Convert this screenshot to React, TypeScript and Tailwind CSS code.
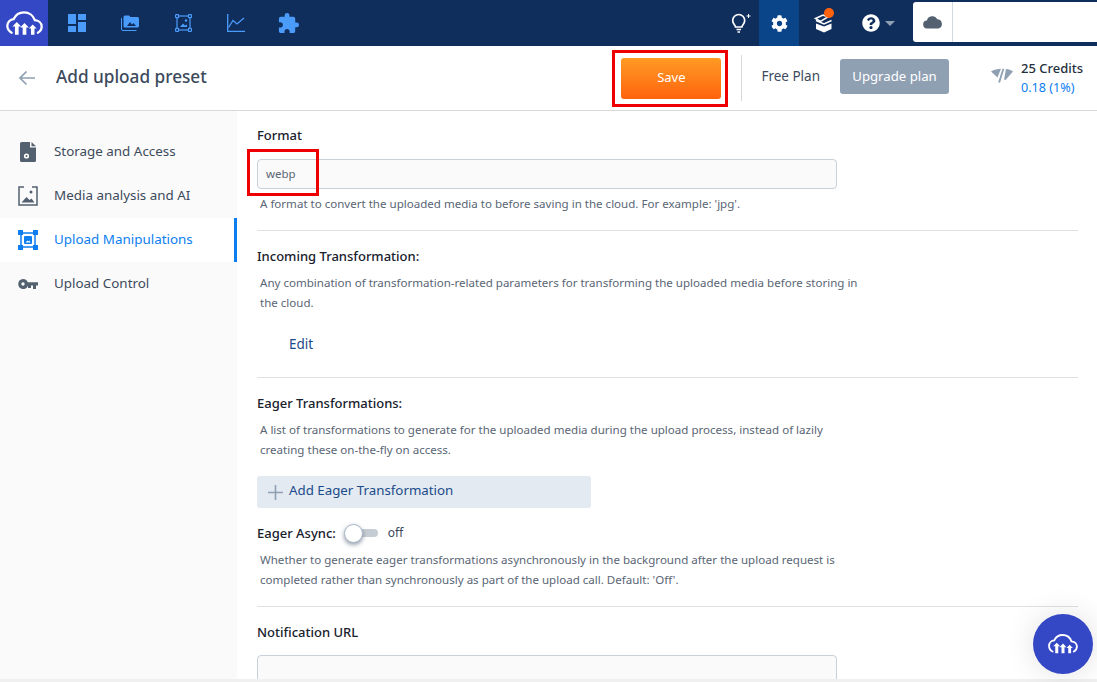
import { FaCog, FaQuestionCircle } from 'react-icons/fa';
import { MdExtension } from 'react-icons/md';

const font = "font-['Noto_Sans','Liberation_Sans',sans-serif]";

function CloudLogo({ className }: { className?: string }) {
  return (
    <svg viewBox="0 0 36 24" className={className} fill="none">
      <path
        d="M5.500 21C3 19.800 1.300 17.300 1.300 14.300c0-3.500 2.700-6.300 6.200-6.600C9.300 3.700 13.200 1.200 17.500 1.200c5 0 9.200 3.200 10.600 7.600 3.500.3 6.600 2.700 6.600 6.200 0 2.600-1.400 4.800-3.700 6"
        stroke="currentColor"
        strokeWidth="2.200"
        strokeLinecap="round"
      />
      <path d="M10.500 10.500l4.200 4.300h-2.400v8.200H8.700v-8.200H6.300z" fill="currentColor" />
      <path d="M18 11.500l4.200 4.300h-2.400v7.200h-3.600v-7.200h-2.400z" fill="currentColor" />
      <path d="M26 13l3.800 3.800h-2.100v6.200h-3.400v-6.200h-2.100z" fill="currentColor" />
    </svg>
  );
}

function NavIcons() {
  return (
    <div className="flex items-center text-[#4b9bfb]">
      <svg viewBox="0 0 18 18" className="ml-[20px] h-[18px] w-[18px]" fill="currentColor">
        <path d="M0 0h8v10H0zM10 0h8v6h-8zM10 8h8v10h-8zM0 12h8v6H0z" />
      </svg>
      <svg viewBox="0 0 18 18" className="ml-[35px] h-[18px] w-[18px]" fill="currentColor">
        <path d="M4 1.500h4l1.500 1.500h7A1.500 1.500 0 0 1 18 4.500V12a1.500 1.500 0 0 1-1.500 1.500H4A1.500 1.500 0 0 1 2.500 12V3A1.500 1.500 0 0 1 4 1.500z" />
        <path d="M.5 4v11A1.500 1.500 0 0 0 2 16.500h13.500" stroke="currentColor" fill="none" strokeWidth="1" />
        <path d="M6 12l3-4 2 2.500 1.500-1.500 2.500 3z" fill="#0f2e5c" />
      </svg>
      <svg viewBox="0 0 17 18" className="ml-[36px] h-[18px] w-[17px]" fill="none" stroke="currentColor" strokeWidth="1.200">
        <rect x="2" y="2" width="13" height="14" />
        <rect x=".6" y=".6" width="3" height="3" rx=".6" fill="#0f2e5c" />
        <rect x="13.400" y=".6" width="3" height="3" rx=".6" fill="#0f2e5c" />
        <rect x=".6" y="14.400" width="3" height="3" rx=".6" fill="#0f2e5c" />
        <rect x="13.400" y="14.400" width="3" height="3" rx=".6" fill="#0f2e5c" />
        <path d="M5 13l3-3.500 2 2 2-1v2.500z" fill="currentColor" stroke="none" />
        <circle cx="11" cy="6.500" r="1.200" fill="currentColor" stroke="none" />
      </svg>
      <svg viewBox="0 0 18 18" className="ml-[35px] h-[18px] w-[18px]" fill="none" stroke="currentColor" strokeWidth="1.300">
        <path d="M.7 0v17.300H18" />
        <path d="M1.500 13.500L6 6.500l4 3.500 7-6" />
      </svg>
      <MdExtension className="ml-[32px] h-[23px] w-[23px]" />
    </div>
  );
}

function TopBar() {
  return (
    <div className="flex h-[46px] items-stretch bg-[#0f2e5c]">
      <div className="flex w-[48px] items-center justify-center bg-[#3448c5] text-white">
        <CloudLogo className="h-[25px] w-[37px]" />
      </div>
      <NavIcons />
      <div className="flex-1" />
      <div className="flex items-center text-white">
        <svg viewBox="0 0 20 24" className="h-[24px] w-[20px]" fill="none" stroke="currentColor" strokeWidth="1.700">
          <path d="M4.500 16c0-2-2.800-3-2.800-6.500a6 6 0 0 1 12 0c0 3.500-2.800 4.500-2.800 6.500z" />
          <path d="M5.500 18.500h4.500M6.500 21h2.500" />
          <path d="M17.500 3v4M15.500 5h4" strokeWidth="1" />
        </svg>
        <div className="ml-[8px] flex h-[46px] w-[40px] items-center justify-center bg-[#0a4489]">
          <FaCog className="h-[17px] w-[17px] text-white" />
        </div>
        <div className="relative ml-[15px] flex h-[46px] w-[20px] items-center">
          <svg viewBox="0 0 20 20" className="h-[20px] w-[20px]" fill="none" stroke="currentColor" strokeWidth="1.500">
            <path d="M1.500 5.500L9 2l5 2-7.500 4.500z" />
            <path d="M2 10.500l8 3 7.500-3V16L10 19.500 2 16z" fill="currentColor" stroke="none" />
            <path d="M2 7.500l8 3.500 7.500-3.500" />
          </svg>
          <div className="absolute left-[10px] top-[8px] h-[10px] w-[10px] rounded-full bg-[#ff620c]" />
        </div>
        <FaQuestionCircle className="ml-[28px] h-[18px] w-[18px]" />
        <div className="ml-[5px] h-0 w-0 border-x-[5px] border-t-[5px] border-x-transparent border-t-[#90a0b3]" />
      </div>
      <div className="ml-[18px] mt-[2px] flex h-[40px] w-[184px] rounded-l-[3px] bg-white">
        <div className="flex w-[40px] items-center justify-center border-r border-[#d1d9e3]">
          <svg viewBox="0 0 20 14" className="h-[14px] w-[20px]" fill="#53606f">
            <path d="M4.500 13.500a4 4 0 0 1-.6-8A5.500 5.500 0 0 1 14.200 4.300 4.700 4.700 0 0 1 15.500 13.500z" />
          </svg>
        </div>
      </div>
    </div>
  );
}

function SubHeader() {
  return (
    <div className="relative flex h-[65px] items-center border-b border-[#d9d9d9] bg-white">
      <svg viewBox="0 0 18 16" className="ml-[18px] h-[16px] w-[18px]" fill="none" stroke="#90a0b3" strokeWidth="1.700">
        <path d="M17 8H2M8.500 1.500L2 8l6.500 6.500" />
      </svg>
      <div className="mb-[2px] ml-[20px] text-[17.200px] font-medium text-[#3c4a5c]">Add upload preset</div>
      <div className="flex-1" />
      <button className="mr-[20px] h-[41px] w-[100px] rounded-[3px] bg-gradient-to-b from-[#ff9a24] to-[#ff620c] text-[13px] text-white">
        Save
      </button>
      <div className="h-[46px] w-px bg-[#d9d9d9]" />
      <div className="mb-[3px] ml-[19px] text-[13.500px] text-[#3c4a5c]">Free Plan</div>
      <button className="mb-[3px] ml-[20px] h-[35px] w-[109px] rounded-[3px] bg-[#90a0b3] text-[13.200px] text-white">
        Upgrade plan
      </button>
      <svg viewBox="0 0 22 15" className="mb-[5px] ml-[42px] h-[15px] w-[22px]" fill="#90a0b3">
        <path d="M0 3.500C3 1.800 6.500.8 10 .8L6.500 9.500z" />
        <path d="M11.500.8h1.800L9 14.800l-1.800-.6z" />
        <path d="M15 1c2.500.3 5 1.200 7 2.500L14.500 12l-1.500-.5z" />
      </svg>
      <div className="ml-[8px] mr-[14px] flex w-[62px] flex-col whitespace-nowrap text-[13px] leading-[19px]">
        <span className="font-medium text-[#26303d]">25 Credits</span>
        <span className="text-[12.600px] text-[#0c7ef0]">0.18 (1%)</span>
      </div>
      <div className="pointer-events-none absolute left-[612px] top-[4px] h-[57px] w-[116px] border-[3px] border-[#ee0000]" />
    </div>
  );
}

const rows = ['Storage and Access', 'Media analysis and AI', 'Upload Manipulations', 'Upload Control'];

function RowIcon({ index, color }: { index: number; color: string }) {
  if (index === 0) {
    return (
      <svg viewBox="0 0 16 20" className="ml-[2px] h-[20px] w-[16px]" fill={color}>
        <path d="M1.500 0H10v5.500h6V18.500a1.500 1.500 0 0 1-1.500 1.500h-13A1.500 1.500 0 0 1 0 18.500v-17A1.500 1.500 0 0 1 1.500 0zM11.500 0L16 4.200h-4.500z" />
        <circle cx="6.500" cy="14" r="2.600" fill="white" />
        <circle cx="6.500" cy="14" r="1" fill={color} />
      </svg>
    );
  }
  if (index === 1) {
    return (
      <svg viewBox="0 0 20 20" className="h-[20px] w-[20px]" fill="none" stroke={color} strokeWidth="1.500">
        <path d="M6 1H1v18h18V1h-5" />
        <path d="M3.500 16.500l5-5.500 3 3 2-1.500 3 4z" fill={color} stroke="none" />
        <circle cx="13" cy="6" r="1.500" fill={color} stroke="none" />
      </svg>
    );
  }
  if (index === 2) {
    return (
      <svg viewBox="0 0 20 20" className="h-[20px] w-[20px]" fill="none" stroke={color} strokeWidth="1.500">
        <rect x="3" y="3" width="14" height="14" />
        <path d="M0 0h5v5H0zM15 0h5v5h-5zM0 15h5v5H0zM15 15h5v5h-5z" fill={color} stroke="none" />
        <rect x="6" y="6" width="8" height="8" rx="1" fill={color} stroke="none" />
        <path d="M7.500 12.500l2-2 1 1 1-1 1 2z" fill="white" stroke="none" />
      </svg>
    );
  }
  return (
    <svg viewBox="0 0 20 10" className="h-[10px] w-[20px]" fill={color}>
      <path d="M5 0a5 5 0 0 1 4.700 3.300H20v3.200h-2V10h-3V6.500h-2V9h-3V6.700A5 5 0 1 1 5 0zm0 3.300a1.700 1.700 0 1 0 0 3.400 1.700 1.700 0 0 0 0-3.400z" />
    </svg>
  );
}

function Sidebar() {
  return (
    <div className="flex w-[237px] shrink-0 flex-col bg-[#fafafa] pt-[19px]">
      {rows.map((label, i) =>
        i === 2 ? (
          <div key={label} className="flex h-[44px] items-center border-r-[3px] border-[#0c7ef0] bg-white">
            <div className="flex w-[54px] items-center pl-[18px]">
              <RowIcon index={i} color="#0c7ef0" />
            </div>
            <span className="pb-[2px] text-[13.400px] text-[#0c7ef0]">{label}</span>
          </div>
        ) : (
          <div key={label} className="flex h-[44px] items-center">
            <div className="flex w-[54px] items-center pl-[18px]">
              <RowIcon index={i} color="#53606f" />
            </div>
            <span className="pb-[2px] text-[13.400px] text-[#3c4a5c]">{label}</span>
          </div>
        )
      )}
    </div>
  );
}

function Label({ children }: { children: string }) {
  return <div className="text-[13px] font-medium leading-[20px] text-[#18212c]">{children}</div>;
}

function Help({ children }: { children: string }) {
  return <p className="ml-[3px] w-[600px] text-[11.550px] leading-[20px] text-[#5a6675]">{children}</p>;
}

function Divider() {
  return <div className="h-px w-[821px] bg-[#e0e0e0]" />;
}

function Content() {
  return (
    <div className="relative flex-1 overflow-hidden bg-white pl-[20px] pt-[14px]">
      <Label>Format</Label>
      <div className="mt-[14px] flex h-[30px] w-[580px] items-center rounded-[4px] border border-[#c6d1dc] bg-[#fafafa] pl-[8px] text-[11.500px] text-[#5a6675]">
        webp
      </div>
      <div className="mt-[5px]">
        <Help>A format to convert the uploaded media to before saving in the cloud. For example: 'jpg'.</Help>
      </div>
      <div className="mt-[16px]">
        <Divider />
      </div>
      <div className="mt-[15px]">
        <Label>Incoming Transformation:</Label>
      </div>
      <div className="mt-[7px]">
        <Help>Any combination of transformation-related parameters for transforming the uploaded media before storing in the cloud.</Help>
      </div>
      <div className="ml-[32px] mt-[21px] text-[13.500px] leading-[20px] text-[#1a4a8a]">Edit</div>
      <div className="mt-[23px]">
        <Divider />
      </div>
      <div className="mt-[15px]">
        <Label>Eager Transformations:</Label>
      </div>
      <div className="mt-[7px]">
        <Help>A list of transformations to generate for the uploaded media during the upload process, instead of lazily creating these on-the-fly on access.</Help>
      </div>
      <div className="mt-[16px] flex h-[32px] w-[334px] items-center rounded-[3px] bg-[#e3eaf1] pb-[2px] pl-[11px] text-[13.300px] text-[#1a4a8a]">
        <svg viewBox="0 0 14 14" className="mr-[6px] mt-[2px] h-[15px] w-[15px]" stroke="#90a0b3" strokeWidth="1.500">
          <path d="M7 0v14M0 7h14" />
        </svg>
        Add Eager Transformation
      </div>
      <div className="mt-[15px] flex h-[20px] items-center">
        <Label>Eager Async:</Label>
        <div className="relative ml-[8px] h-[20px] w-[34px]">
          <div className="absolute left-[6px] top-[6px] h-[8px] w-[28px] rounded-full bg-[#c6ccd3]" />
          <div className="absolute left-0 top-[1px] h-[19px] w-[19px] rounded-full border border-[#a9b7c7] bg-white shadow-[0_2px_4px_rgba(40,60,90,0.5)]" />
        </div>
        <span className="ml-[10px] text-[12px] text-[#3c4a5c]">off</span>
      </div>
      <div className="mt-[7px]">
        <Help>Whether to generate eager transformations asynchronously in the background after the upload request is completed rather than synchronously as part of the upload call. Default: 'Off'.</Help>
      </div>
      <div className="mt-[16px]">
        <Divider />
      </div>
      <div className="mt-[15px]">
        <Label>Notification URL</Label>
      </div>
      <div className="mt-[13px] h-[30px] w-[580px] rounded-[4px] border border-[#c6d1dc] bg-[#fafafa]" />
      <div className="pointer-events-none absolute left-[10px] top-[38px] h-[47px] w-[72px] border-[3px] border-[#ee0000]" />
    </div>
  );
}

export default function App() {
  return (
    <div className={`relative flex h-[682px] w-[1097px] flex-col overflow-hidden bg-white ${font}`}>
      <TopBar />
      <SubHeader />
      <div className="flex min-h-0 flex-1">
        <Sidebar />
        <Content />
      </div>
      <div className="h-[3px] bg-[#f0f0f0]" />
      <div className="absolute left-[1033px] top-[614px] flex h-[60px] w-[60px] items-center justify-center rounded-full bg-[#3448c5] text-white shadow-[0_0_30px_rgba(0,0,0,0.12)]">
        <CloudLogo className="h-[20px] w-[30px]" />
      </div>
    </div>
  );
}
